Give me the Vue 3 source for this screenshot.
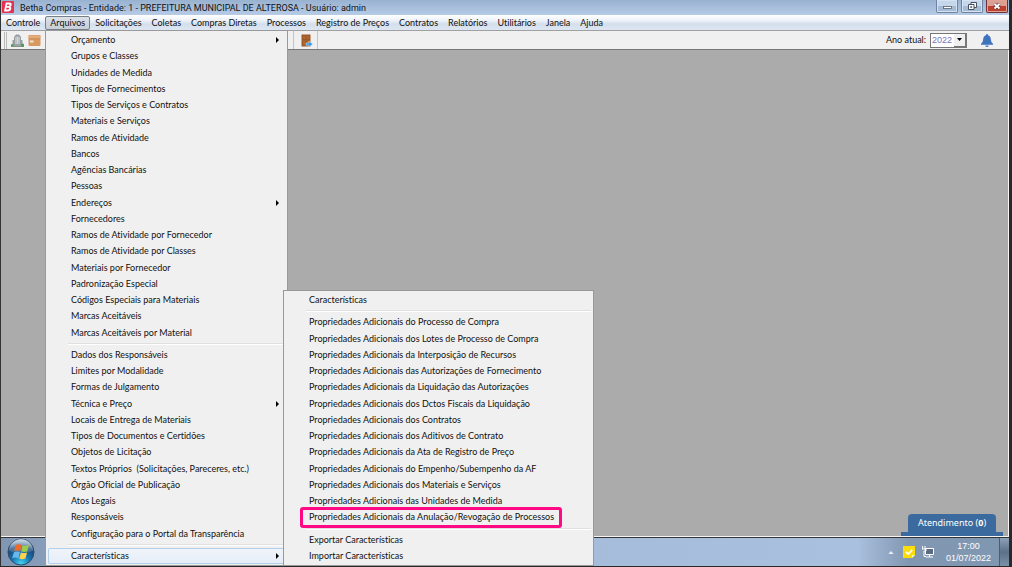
<script setup>
const bar = ['Controle', 'Arquivos', 'Solicitações', 'Coletas', 'Compras Diretas', 'Processos', 'Registro de Preços', 'Contratos', 'Relatórios', 'Utilitários', 'Janela', 'Ajuda']
const withSub = ['Orçamento', 'Endereços', 'Técnica e Preço', 'Características']
const mainMenu = [
  ['Orçamento', 'Grupos e Classes', 'Unidades de Medida', 'Tipos de Fornecimentos', 'Tipos de Serviços e Contratos', 'Materiais e Serviços', 'Ramos de Atividade', 'Bancos', 'Agências Bancárias', 'Pessoas', 'Endereços', 'Fornecedores', 'Ramos de Atividade por Fornecedor', 'Ramos de Atividade por Classes', 'Materiais por Fornecedor', 'Padronização Especial', 'Códigos Especiais para Materiais', 'Marcas Aceitáveis', 'Marcas Aceitáveis por Material'],
  ['Dados dos Responsáveis', 'Limites por Modalidade', 'Formas de Julgamento', 'Técnica e Preço', 'Locais de Entrega de Materiais', 'Tipos de Documentos e Certidões', 'Objetos de Licitação', 'Textos Próprios  (Solicitações, Pareceres, etc.)', 'Órgão Oficial de Publicação', 'Atos Legais', 'Responsáveis', 'Configuração para o Portal da Transparência'],
  ['Características'],
]
const props = ['do Processo de Compra', 'dos Lotes de Processo de Compra', 'da Interposição de Recursos', 'das Autorizações de Fornecimento', 'da Liquidação das Autorizações', 'dos Dctos Fiscais da Liquidação', 'dos Contratos', 'dos Aditivos de Contrato', 'da Ata de Registro de Preço', 'do Empenho/Subempenho da AF', 'dos Materiais e Serviços', 'das Unidades de Medida', 'da Anulação/Revogação de Processos']
const subMenu = [['Características'], props.map((p) => 'Propriedades Adicionais ' + p), ['Exportar Características', 'Importar Características']]
const marked = 'Propriedades Adicionais da Anulação/Revogação de Processos'
</script>

<template>
  <div class="screen">
    <div class="desktop">
      <header class="titlebar">
        <svg class="logo" viewBox="0 0 12 12" aria-hidden="true">
          <rect width="12" height="12" rx="1" fill="#e43150" />
          <path d="M3.8 1.6H8Q10.2 1.8 9.7 4 9.4 5.3 8.4 5.8 9.7 6.3 9.3 8 8.7 10.4 6.4 10.4H2ZM5.3 3.6 4.9 5.1H6.6Q7.4 5 7.6 4.3 7.6 3.6 6.9 3.6ZM4.5 6.8 4.1 8.4H6.1Q7 8.3 7.2 7.6 7.3 6.8 6.5 6.8Z" fill="#fff" fill-rule="evenodd" />
        </svg>
        <h1>Betha Compras - Entidade: 1 - PREFEITURA MUNICIPAL DE ALTEROSA - Usuário: admin</h1>
        <div class="winbtns">
          <button type="button" aria-label="Minimizar"><svg viewBox="0 0 20 12"><rect x="6.5" y="6.5" width="8" height="2" fill="#fff" stroke="#555f70" stroke-width=".8" /></svg></button>
          <button type="button" aria-label="Restaurar"><svg viewBox="0 0 20 12"><path d="M9 2.5H14.5V7.5H9Z" fill="#fff" stroke="#444f60" /><path d="M6.5 4.5H12V9.5H6.5Z" fill="#fff" stroke="#444f60" /><path d="M8.5 6.5H10V7.5H8.5Z" fill="#667" stroke="#444f60" stroke-width=".5" /></svg></button>
          <button type="button" class="close" aria-label="Fechar"><svg viewBox="0 0 20 12"><path d="M7.5 4 12.5 8.5M12.5 4 7.5 8.5" stroke="#60303a" stroke-width="3.4" /><path d="M7.5 4 12.5 8.5M12.5 4 7.5 8.5" stroke="#fff" stroke-width="2" /></svg></button>
        </div>
      </header>

      <nav class="menubar" aria-label="Menu principal">
        <button v-for="b in bar" :key="b" type="button" :class="{ open: b === 'Arquivos' }">{{ b }}</button>
      </nav>

      <div class="toolbar">
        <div class="tools">
          <span class="grip"></span>
          <button type="button" aria-label="Entidade"><svg viewBox="0 0 13 13"><path d="M3.5 3 5 1H8L9.5 3V11H3.5Z" fill="#a9afb5" stroke="#7d858c" stroke-width=".7" /><path d="M1.5 6H3.5V11.5H1.5ZM9.5 6H11.5V11.5H9.5Z" fill="#989fa6" /><path d="M5 3V10M6.5 3V10M8 3V10" stroke="#e3e6e8" stroke-width=".7" /><path d="M0 12.2H13" stroke="#859085" stroke-width="1.6" /><circle cx="1.3" cy="11.3" r="1.3" fill="#4d9d58" /><circle cx="11.5" cy="11.2" r="1.6" fill="#4d9d58" /></svg></button>
          <button type="button" aria-label="Materiais"><svg viewBox="0 0 13 13"><rect x=".5" y="1" width="12" height="11" rx="1" fill="#d99a62" /><path d="M.5 1.5H12.5V4.5H.5Z" fill="#e3ad7b" /><path d="M1 4.8H12" stroke="#be7e49" stroke-width=".6" /><path d="M2 6.5H5.5V8.5H2Z" fill="#f7e5d2" /></svg></button>
          <button type="button" aria-label="Fornecedores"><svg viewBox="0 0 13 13"><rect y="2" width="12" height="9" rx="2" fill="#ecb14a" /></svg></button>
        </div>
        <button type="button" class="exit" aria-label="Sair"><svg viewBox="0 0 13 13"><path d="M1.5.5H10.5V12.5H1.5Z" fill="#9e5925" /><path d="M3 2H5.4V5H3ZM6.6 2H9V5H6.6ZM3 6.5H5.4V11H3ZM6.6 6.5H9V11H6.6Z" fill="#ad6831" /><path d="M6 9H9V7L12.8 10.2 9 13V11.3H6Z" fill="#3c9ae5" stroke="#d8edfb" stroke-width=".5" /></svg></button>
        <div class="year">
          <label for="ano">Ano atual:</label>
          <span class="combo">
            <select id="ano"><option>2022</option></select>
            <span class="drop"><svg viewBox="0 0 7 4"><path d="M0 0H7L3.5 4Z" /></svg></span>
          </span>
          <button type="button" aria-label="Notificações"><svg viewBox="0 0 12 13"><path d="M6 0Q7 0 7 1.2 9.7 2 9.8 5.2 9.9 8.4 12 9.8V10.8H0V9.8Q2.1 8.4 2.2 5.2 2.3 2 5 1.2 5 0 6 0ZM4.3 11.4H7.7Q7.4 13 6 13 4.6 13 4.3 11.4Z" fill="#3d74bd" /></svg></button>
        </div>
      </div>

      <main class="workspace">
        <button type="button" class="support"><span>Atendimento (<b>0</b>)</span></button>
      </main>

      <footer class="taskbar">
        <button type="button" class="start" aria-label="Iniciar">
          <svg viewBox="0 0 28 28">
            <defs>
              <radialGradient id="orb" cx=".5" cy=".95" r=".9"><stop offset="0" stop-color="#45d6f5" /><stop offset=".4" stop-color="#1975b0" /><stop offset=".75" stop-color="#1b4777" /><stop offset="1" stop-color="#7e9fbd" /></radialGradient>
              <linearGradient id="gloss" x2="0" y2="1"><stop offset="0" stop-color="#fff" stop-opacity=".6" /><stop offset="1" stop-color="#fff" stop-opacity=".1" /></linearGradient>
            </defs>
            <circle cx="14" cy="14" r="13" fill="url(#orb)" stroke="#304c6c" />
            <path d="M2 13A12 12 0 0 1 26 13Q14 17 2 13Z" fill="url(#gloss)" />
            <path d="M8.8 7Q11.4 5.4 14.6 6.8L13.2 13Q10.2 11.8 7.2 13.1Z" fill="#ef692b" />
            <path d="M15.6 7.3Q18.6 8.6 22 7.1L20.3 13.3Q17.5 14.6 14.2 13.3Z" fill="#9ccc49" />
            <path d="M6.9 14.2Q9.8 12.9 13 14.1L11.4 20.2Q8.3 18.9 5.2 20.2Z" fill="#67b8ec" />
            <path d="M13.9 14.4Q17 15.7 20.1 14.4L18.4 20.6Q15.4 21.9 12.2 20.5Z" fill="#ffd24b" />
          </svg>
        </button>
        <div class="tray">
          <svg class="up" viewBox="0 0 7 4"><path d="M0 4 3.5 0 7 4Z" fill="#e9eff7" /></svg>
          <svg class="note" viewBox="0 0 12 12"><path d="M0 0H12V9L9 12H0Z" fill="#fadd0b" /><path d="M9 12V9H12Z" fill="#fff7b4" /><path d="M3 6 5.2 8 9.3 3.8" fill="none" stroke="#fff" stroke-width="1.7" /></svg>
          <svg class="net" viewBox="0 0 12 12"><path d="M3.5 2.5H11.5V8.5H3.5ZM4 11H11M7.5 8.5V11" fill="#5c6c7f" stroke="#fff" /><path d="M.7 0V3M3 0V3M0 3H4V5H2V10.5H4" fill="none" stroke="#fff" /></svg>
          <time datetime="2022-07-01T17:00"><span>17:00</span><span>01/07/2022</span></time>
        </div>
        <span class="peek"></span>
      </footer>

      <div class="popup main" role="menu" aria-label="Arquivos">
        <template v-for="(group, i) in mainMenu" :key="i">
          <hr v-if="i" />
          <button v-for="t in group" :key="t" type="button" role="menuitem" :class="{ active: i === 2 }">
            <span>{{ t }}</span>
            <svg v-if="withSub.includes(t)" viewBox="0 0 3 6"><path d="M0 0 3 3 0 6Z" /></svg>
          </button>
        </template>
      </div>

      <div class="popup sub" role="menu" aria-label="Características">
        <template v-for="(group, i) in subMenu" :key="i">
          <hr v-if="i" />
          <button v-for="t in group" :key="t" type="button" role="menuitem" :class="{ marked: t === marked }"><span>{{ t }}</span></button>
        </template>
      </div>
    </div>
  </div>
</template>

<style>
body { background: #000; }
</style>

<style scoped>
* { box-sizing: border-box; }
.screen {
  min-height: 100vh;
  display: flex;
  background: #292929;
  padding: 0 3px 1px 0;
  font: 9px/12px Lato, "Noto Sans", sans-serif;
  font-variant-ligatures: none;
  color: #111;
}
button { font: inherit; font-variant-ligatures: none; color: inherit; border: 0; padding: 0; margin: 0; background: none; }
svg { display: block; }
.desktop { position: relative; flex: 1; display: flex; flex-direction: column; border-left: 1px solid #333; min-width: 0; }
.titlebar { height: 15px; display: flex; align-items: center; background: linear-gradient(#98b2d1, #b6cbe6); padding: 0 1px; }
.logo { width: 12px; height: 12px; margin-bottom: 1px; }
h1 { font: 9px/12px Roboto, sans-serif; margin: 0 0 0 6px; flex: 1; white-space: nowrap; }
.winbtns { display: flex; gap: 3px; align-self: flex-start; }
.winbtns button { width: 22px; height: 13px; border: 1px solid #6d83a0; border-top: 0; border-radius: 0 0 2px 2px; background: linear-gradient(#c6d7eb 50%, #a5bad5 50%); box-shadow: inset 0 0 0 1px #d5e2f1; }
.winbtns .close { border-color: #713039; background: linear-gradient(#dba093 50%, #bd422d 50%); box-shadow: inset 0 0 0 1px #dfa396; }
.menubar { height: 15px; display: flex; align-items: center; background: linear-gradient(#fff, #eef3fa 35%, #d5dfec 60%, #dce7f3); }
.menubar button { padding: 0 5px; height: 14px; line-height: 12px; white-space: nowrap; }
.menubar .open { border: 1px solid #777f88; border-radius: 2px; background: linear-gradient(#dce1e8, #c8ced7); padding: 0 4px; }
.toolbar { height: 20px; display: flex; align-items: center; background: #f0f0f0; border-top: 1px solid #a0a0a0; border-bottom: 1px solid #777; }
.tools { display: flex; align-items: center; gap: 4px; width: 292px; padding-left: 3px; }
.tools svg, .exit svg { width: 13px; height: 13px; }
.grip { width: 3px; height: 17px; border: solid #bbb; border-width: 0 1px; }
.exit { height: 18px; padding: 0 4px 0 6px; border: solid #c4c4c4; border-width: 0 1px; }
.year { margin-left: auto; display: flex; align-items: center; padding-right: 16px; }
.combo { display: flex; width: 37px; height: 15px; margin: 0 14px 0 4px; background: #fff; border: 1px solid #777; }
select { appearance: none; font: 9px/12px "Liberation Sans", sans-serif; color: #7574bf; border: 0; padding: 0 0 0 1px; width: 23px; height: 13px; background: #fff; flex: none; }
.drop { flex: 1; display: grid; place-items: center; background: #f0f0f0; border: solid #777; border-width: 0 1px 1px 0; }
.drop svg { width: 5px; height: 3px; }
.year button svg { width: 12px; height: 13px; }
.workspace { flex: 1; background: #ababab; border: solid #f5f5f5; border-width: 0 1px 1px 0; display: flex; align-items: flex-end; justify-content: flex-end; }
.support { margin-right: 5px; border-bottom: 4px solid #3b6b9e; border-radius: 4px 4px 0 0; color: #fff; width: 102px; font-family: "Noto Sans", sans-serif; }
.support span { display: block; background: #3b6b9e; margin: 0 7px; border-radius: 4px 4px 0 0; height: 18px; line-height: 18px; }
.taskbar { height: 29px; display: flex; align-items: center; border-top: 1px solid #333; background: linear-gradient(90deg, #8096b3 0, #9fb6d4 20%, #a9c0de 85%, #8197b2 90%, #8097b2); }
.start { margin-left: 6px; }
.start svg { width: 28px; height: 28px; }
.tray { margin-left: auto; display: flex; align-items: center; gap: 7px; color: #fff; }
.up { width: 6px; height: 3px; margin-right: 2px; }
.note, .net { width: 12px; height: 12px; }
time { display: flex; flex-direction: column; align-items: center; margin-left: 5px; font-family: "Liberation Sans", sans-serif; }
.peek { width: 10px; align-self: stretch; margin-left: 8px; border-left: 1px solid #4c5d72; background: linear-gradient(#8da0b5, #5c7088 50%, #7c90a8); }
.popup { position: absolute; display: flex; flex-direction: column; background: #f0f0f0; border: 1px solid #999; padding: 1px 2px; }
.popup button { flex: 1 1 16px; min-height: 12px; display: flex; align-items: center; text-align: left; padding: 0 6px 0 23px; border-radius: 2px; white-space: pre; }
.popup button svg { width: 3px; height: 6px; margin-left: auto; }
.popup hr { flex: none; width: calc(100% - 20px); height: 2px; margin: 2px 0 2px 20px; border: 0; border-top: 1px solid #e0e0e0; border-bottom: 1px solid #fff; }
.main { left: 44px; top: 30px; bottom: 0; width: 243px; }
.popup .active { background: linear-gradient(#f1f5fa, #e5edf7); box-shadow: inset 0 0 0 1px #b1d0ec; }
.sub { left: 282px; bottom: 0; width: 311px; height: 276px; }
.popup .marked { align-self: flex-start; margin-left: 16px; padding: 0 6px 0 7px; border-radius: 1px; outline: 3px solid #ff0a84; outline-offset: -1px; }
</style>
